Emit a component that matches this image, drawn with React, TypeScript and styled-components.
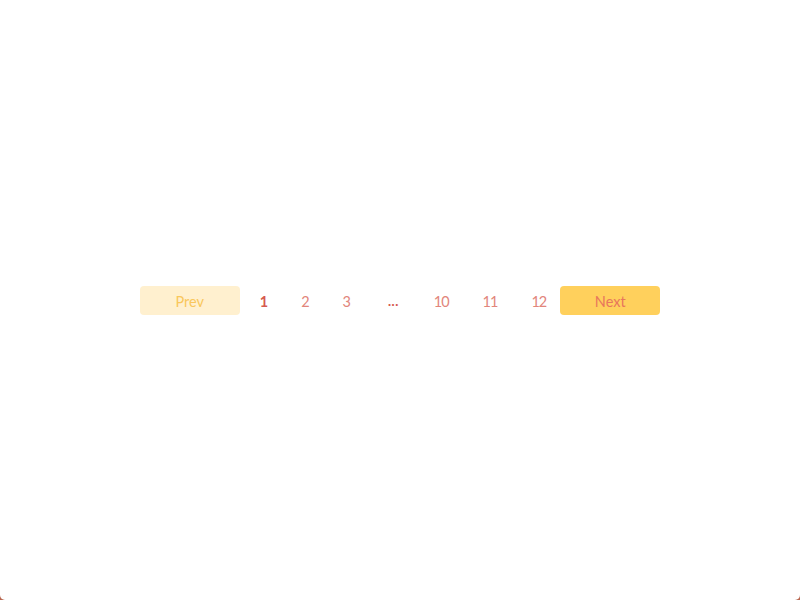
import React from "react";
import styled, { createGlobalStyle } from "styled-components";

const GlobalStyle = createGlobalStyle`
  html, body {
    margin: 0;
    padding: 0;
    background: #b8664f;
  }
  body {
    font-family: "Lato", "Noto Sans", sans-serif;
  }
`;

type PageItem = number | "...";

const pages: PageItem[] = [1, 2, 3, "...", 10, 11, 12];

const Pagination = () => {
  const current = 1;

  return (
    <StyledFrame>
      <StyledNav>
        <StyledEdgeButton variant="prev">Prev</StyledEdgeButton>
        <StyledPages>
          {pages.map((page, index) =>
            page === "..." ? (
              <StyledEllipsis key={index}>...</StyledEllipsis>
            ) : (
              <StyledPage key={index} active={page === current}>
                {page}
              </StyledPage>
            )
          )}
        </StyledPages>
        <StyledEdgeButton variant="next">Next</StyledEdgeButton>
      </StyledNav>
    </StyledFrame>
  );
};

const StyledFrame = styled.div`
  height: 600px;
  background: #ffffff;
  border-radius: 0 0 5px 5px;
  display: flex;
  align-items: center;
  justify-content: center;
`;

const StyledNav = styled.nav`
  display: flex;
  align-items: center;
  margin-top: 1px;
`;

const StyledEdgeButton = styled.button<{ variant: "prev" | "next" }>`
  width: 100px;
  height: 29px;
  padding: 2px 0 0;
  border: none;
  border-radius: 4px;
  font-family: inherit;
  font-size: 14.5px;
  cursor: pointer;
  background: ${(p) => (p.variant === "prev" ? "#fff0cf" : "#ffd05c")};
  color: ${(p) => (p.variant === "prev" ? "#f9c75c" : "#e8765c")};
`;

const StyledPages = styled.div`
  display: flex;
  align-items: center;
  padding: 2px 0 0;

  & > :first-child {
    padding-left: 20px;
  }
  & > :last-child {
    padding-right: 14px;
  }
`;

const StyledPage = styled.span<{ active: boolean }>`
  padding: 0 17px;
  font-size: 14.5px;
  letter-spacing: -1px;
  color: ${(p) => (p.active ? "#d65a50" : "#e2857b")};
  font-weight: ${(p) => (p.active ? 700 : 400)};
`;

const StyledEllipsis = styled.span`
  padding: 0 18px 0 21px;
  font-size: 13px;
  letter-spacing: 0.5px;
  line-height: 1;
  color: #d65a50;
  font-weight: 900;
`;

export default function App() {
  return (
    <>
      <GlobalStyle />
      <Pagination />
    </>
  );
}
